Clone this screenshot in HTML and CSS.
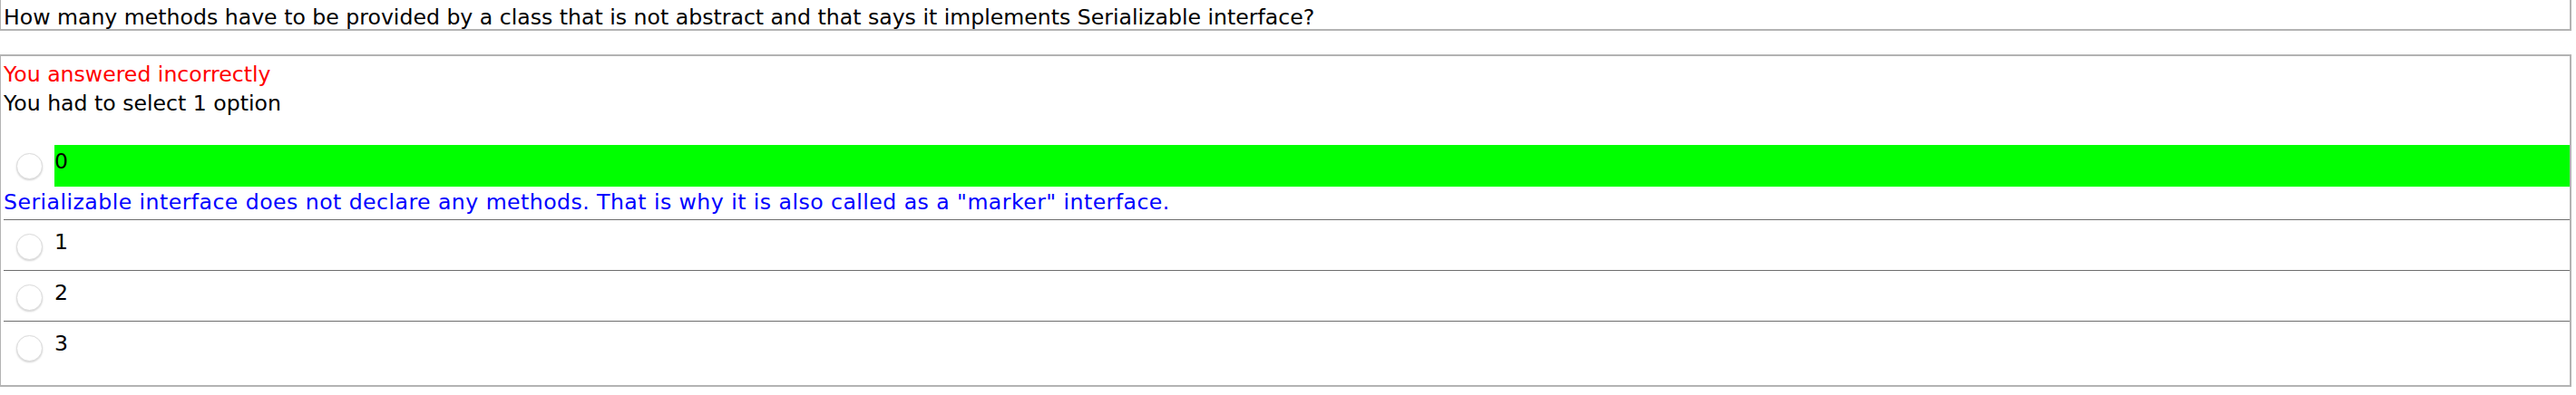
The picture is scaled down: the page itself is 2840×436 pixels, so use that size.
FILE: index.html
```html
<!DOCTYPE html>
<html>
<head>
<meta charset="utf-8">
<link rel="stylesheet" href="styles.css">
</head>
<body>
<div class="page">
  <div class="question">How many methods have to be provided by a class that is not abstract and that says it implements Serializable interface?</div>
  <div class="answer">
    <div class="result">
      <div class="wrong">You answered incorrectly</div>
      <div class="hint">You had to select 1 option</div>
    </div>
    <div class="options">
      <div class="option">
        <div class="choice">
          <div class="radio-cell"><span class="radio"></span></div>
          <div class="label correct">0</div>
        </div>
        <div class="explain">Serializable interface does not declare any methods. That is why it is also called as a "marker" interface.</div>
      </div>
      <div class="option">
        <div class="choice">
          <div class="radio-cell"><span class="radio"></span></div>
          <div class="label">1</div>
        </div>
      </div>
      <div class="option">
        <div class="choice">
          <div class="radio-cell"><span class="radio"></span></div>
          <div class="label">2</div>
        </div>
      </div>
      <div class="option last">
        <div class="choice">
          <div class="radio-cell"><span class="radio"></span></div>
          <div class="label">3</div>
        </div>
      </div>
    </div>
  </div>
</div>
</body>
</html>
```
FILE: styles.css
```css
* { box-sizing: border-box; }
html, body { margin: 0; padding: 0; background: #ffffff; }
body {
  font-family: "DejaVu Sans", Verdana, sans-serif;
  font-size: 23.6px;
  color: #000000;
}
.page { width: 2835px; }

.question {
  border: 2px solid #b3b3b3;
  border-top: 0;
  border-left-width: 1px;
  padding: 5px 3px 0;
  height: 34px;
  line-height: 28px;
  white-space: nowrap;
}

.answer {
  margin-top: 26px;
  border: 2px solid #b3b3b3;
  border-left-width: 1px;
  padding: 4px 0 15px 3px;
}

.result { line-height: 32px; margin-bottom: 24px; }
.wrong { color: #ff0000; }
.hint { color: #000000; }

.options { display: flex; flex-direction: column; }
.option {
  padding: 6px 0 3px;
  border-bottom: 1px solid #6e6e6e;
}
.option.last { border-bottom: 0; }

.choice { display: flex; align-items: center; height: 46px; }
.radio-cell {
  width: 56px;
  flex: none;
  display: flex;
  justify-content: center;
  align-items: center;
}
.radio {
  width: 29px;
  height: 29px;
  border-radius: 50%;
  background: #ffffff;
  border: 1px solid #dcdcdc;
  box-shadow: 0 1px 2px rgba(0, 0, 0, 0.18);
}
.label {
  flex: 1;
  align-self: stretch;
  padding-top: 4px;
  line-height: 28px;
}
.label.correct { background: #00ff00; }

.explain {
  color: #0000ff;
  line-height: 32px;
  margin-top: 1px;
  letter-spacing: 0.45px;
}
```
